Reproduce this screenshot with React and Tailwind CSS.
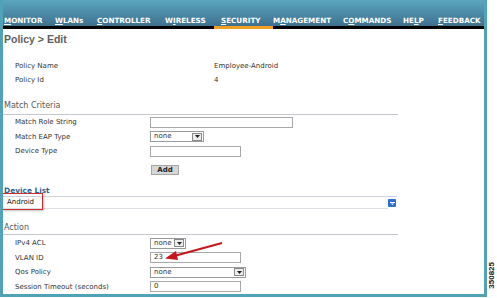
import { useState } from "react";

const NAV = [
  { pre: "", u: "M", post: "ONITOR", w: "w-[51px]" },
  { pre: "", u: "W", post: "LANs", w: "w-[42px]" },
  { pre: "", u: "C", post: "ONTROLLER", w: "w-[68px]" },
  { pre: "W", u: "I", post: "RELESS", w: "w-[56px]" },
  { pre: "", u: "S", post: "ECURITY", w: "w-[52px]", active: true },
  { pre: "M", u: "A", post: "NAGEMENT", w: "w-[70px]" },
  { pre: "C", u: "O", post: "MMANDS", w: "w-[60px]" },
  { pre: "HE", u: "L", post: "P", w: "w-[35px]" },
  { pre: "", u: "F", post: "EEDBACK", w: "w-[46px]" },
];

function Select({ value, w }) {
  return (
    <div className={`${w} h-[11px] border border-[#9a9a9a] bg-white flex items-center justify-between pl-[3px] pr-[1px]`}>
      <span className="leading-none">{value}</span>
      <span className="w-[10px] h-[8px] border border-[#8a8a8a] bg-[#ececec] flex items-center justify-center">
        <svg width="5" height="3" viewBox="0 0 5 3"><path d="M0 0h5L2.5 3z" fill="#222" /></svg>
      </span>
    </div>
  );
}

function Input({ value = "", w }) {
  return (
    <div className={`${w} h-[11px] border border-[#a8a8a8] bg-white flex items-center pl-[3px] leading-none`}>
      {value}
    </div>
  );
}

function Row({ label, children, h = "h-[15px]" }) {
  return (
    <div className={`flex items-center ${h} pl-[12px]`}>
      <div className="w-[135px] shrink-0">{label}</div>
      {children}
    </div>
  );
}

export default function App() {
  const [active] = useState("SECURITY");

  return (
    <div className="flex w-[497px] h-[298px] bg-white font-['DejaVu_Sans',sans-serif] text-[7px] text-[#333]">
      <div className="relative w-[487px] h-[297px] border-x-[3px] border-b-[3px] border-[#4fa2b8] flex flex-col overflow-hidden">
        {/* top menu */}
        <div className="h-[29px] bg-gradient-to-b from-[#5aa6c0] to-[#3c6b89] flex items-end shrink-0">
          <div className="flex w-full border-b-[3px] border-black">
            {NAV.map((n) => (
              <div
                key={n.u + n.post}
                className={`${n.w} shrink-0 relative pl-[1px] pb-[2px] text-white font-bold text-[7.2px] leading-none font-['DejaVu_Sans',sans-serif]`}
              >
                {n.pre}
                <span className="underline">{n.u}</span>
                {n.post}
                {n.active && active === "SECURITY" && (
                  <div className="absolute left-[-6px] right-[-1px] bottom-[-3px] h-[3px] bg-[#f0a020]" />
                )}
              </div>
            ))}
          </div>
        </div>

        <div className="h-[22px] flex items-center pl-[1px] font-['Liberation_Sans',sans-serif] font-bold text-[10.5px] text-[#606060]">
          Policy &gt; Edit
        </div>

        <div className="mt-[8px]">
          <div className="flex items-center h-[14px] pl-[12px]">
            <div className="w-[199px]">Policy Name</div>
            <div>Employee-Android</div>
          </div>
          <div className="flex items-center h-[14px] pl-[12px]">
            <div className="w-[199px]">Policy Id</div>
            <div>4</div>
          </div>
        </div>

        {/* match criteria */}
        <div className="mt-[12px] w-[395px] h-[16px] flex items-center pl-[1px] border-b border-[#c4c8d0] text-[8px] text-[#555]">
          Match Criteria
        </div>
        <Row label="Match Role String">
          <Input w="w-[143px]" />
        </Row>
        <Row label="Match EAP Type">
          <Select value="none" w="w-[54px]" />
        </Row>
        <Row label="Device Type">
          <Input w="w-[91px]" />
        </Row>
        <div className="mt-[6px] pl-[148px]">
          <div className="w-[28px] h-[10px] bg-[#d6d6d6] border border-[#a5a5a5] flex items-center justify-center font-bold text-[7px] leading-none text-[#222]">
            Add
          </div>
        </div>

        {/* device list */}
        <div className="mt-[9px] h-[12px] flex items-center pl-[1px] font-bold text-[7.4px] text-[#2f6690]">
          Device List
        </div>
        <div className="w-[395px] border-t border-[#cfd2d8] flex -ml-[1px]">
          <div className="flex-1 h-[12px] flex items-center pl-[5px] border-b border-[#dcdfe4] text-[#111]">Android</div>
          <div className="w-[9px] pt-[2px]">
            <div className="w-[8px] h-[8px] bg-[#2b6fcf] rounded-[1px] flex items-center justify-center">
              <svg width="5" height="3" viewBox="0 0 5 3"><path d="M0 0h5v1H0zM1 1.6h3L2.5 3z" fill="#fff" /></svg>
            </div>
          </div>
        </div>

        {/* action */}
        <div className="mt-[13px] w-[395px] h-[13px] flex items-center pl-[1px] border-b border-[#c4c8d0] text-[8px] text-[#555]">
          Action
        </div>
        <div className="pt-[1px]">
          <Row label="IPv4 ACL" h="h-[14.5px]">
            <Select value="none" w="w-[36px]" />
          </Row>
          <Row label="VLAN ID" h="h-[14.5px]">
            <Input value="23" w="w-[91px]" />
          </Row>
          <Row label="Qos Policy" h="h-[14.5px]">
            <Select value="none" w="w-[96px]" />
          </Row>
          <Row label="Session Timeout (seconds)" h="h-[14.5px]">
            <Input value="0" w="w-[91px]" />
          </Row>
        </div>

        {/* annotations */}
        <div className="absolute left-[-1px] top-[193px] w-[41px] h-[17px] border-[1.5px] border-[#cf2b2b] shadow-[1px_1px_2px_rgba(0,0,0,0.25)]" />
        <svg className="absolute left-[-3px] top-0 pointer-events-none" width="487" height="297">
          <line x1="222" y1="243" x2="176" y2="255.5" stroke="#c4161c" strokeWidth="2" />
          <path d="M165 258.5 L176 251 L178 260 Z" fill="#c4161c" />
        </svg>
      </div>

      <div className="flex-1 flex items-end justify-center pb-[9px]">
        <div className="[writing-mode:vertical-rl] rotate-180 font-['Liberation_Sans',sans-serif] text-[8px] font-bold text-[#222] leading-none">
          350825
        </div>
      </div>
    </div>
  );
}
